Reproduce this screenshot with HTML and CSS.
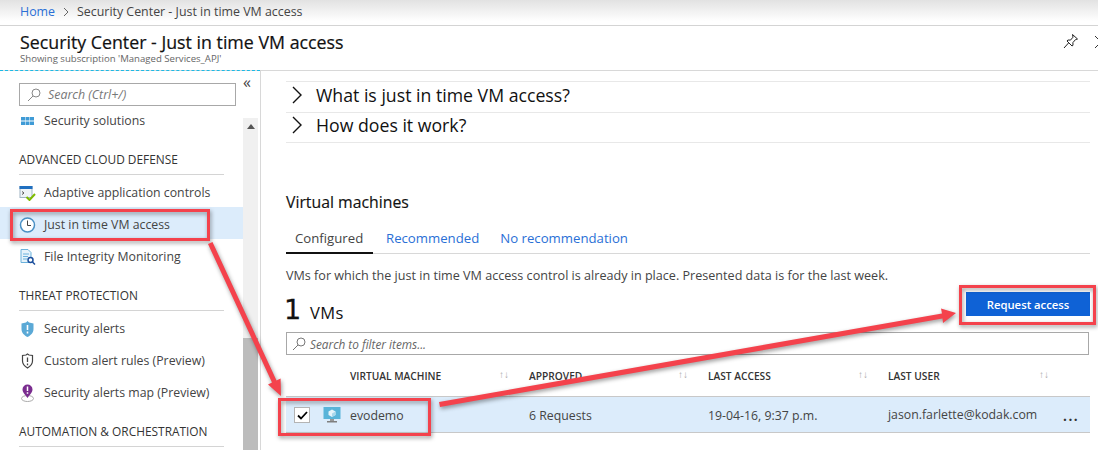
FILE: index.html
```html
<!DOCTYPE html>
<html lang="en">
<head>
<meta charset="utf-8">
<title>Security Center - Just in time VM access</title>
<link rel="stylesheet" href="styles.css">
</head>
<body>
<div class="page">
  <nav class="crumbs"><a class="link">Home</a><svg class="crumb-sep" width="6" height="10" viewBox="0 0 6 10"><path d="M1 1l4 4-4 4" fill="none" stroke="#666"/></svg><span>Security Center - Just in time VM access</span></nav>
  <header class="blade-head">
    <div>
      <h1>Security Center - Just in time VM access</h1>
      <p>Showing subscription 'Managed Services_APJ'</p>
    </div>
    <div class="blade-actions">
      <svg width="16" height="16" viewBox="0 0 16 16"><path d="M9.5 1.5l5 4.5-2 .6-2.6 3 .1 2.7-1 .7-5-5 .9-1 2.6.1 2.5-2.9z" fill="none" stroke="#222"/><path d="M5.5 10L1 15" stroke="#222"/></svg>
      <svg width="8" height="14" viewBox="0 0 8 14"><path d="M1 1l6 6-6 6" fill="none" stroke="#333"/></svg>
    </div>
  </header>
  <div class="blade-body">
    <aside class="side">
      <div class="side-top">
        <div class="side-search">
          <svg width="14" height="14" viewBox="0 0 14 14"><circle cx="9" cy="5" r="4" fill="none" stroke="#888"/><path d="M6 8l-5 5" stroke="#888"/></svg>
          <span>Search (Ctrl+/)</span>
        </div>
        <span class="collapse">«</span>
      </div>
      <div class="side-scroll">
        <div class="side-list">
          <div class="item item-first">
            <svg class="ico" width="13" height="8" viewBox="0 0 13 8"><path fill="#3f9bd6" d="M0 0h4v3.5H0zM4.500 0h4v3.500h-4zM9 0h4v3.500H9zM0 4.500h4V8H0zM4.500 4.500h4V8h-4zM9 4.500h4V8H9z"/></svg>
            <span>Security solutions</span>
          </div>
          <h2>ADVANCED CLOUD DEFENSE</h2>
          <div class="item">
            <svg class="ico" width="16" height="16" viewBox="0 0 16 16"><rect x="0.500" y="1.500" width="12" height="11" fill="#eef3f7" stroke="#9fb4c4"/><rect y="1" width="13" height="3" fill="#1f6fc0"/><path d="M2.500 6.500l2 1.500-2 1.500" fill="none" stroke="#555"/><path d="M7 12l3 3 5.500-6" fill="none" stroke="#7fba00" stroke-width="2"/></svg>
            <span>Adaptive application controls</span>
          </div>
          <div class="item active">
            <svg class="ico" width="16" height="16" viewBox="0 0 16 16"><circle cx="8" cy="8" r="7" fill="#fff" stroke="#4a90c4" stroke-width="1.500"/><path d="M8 3.500V8.500H11.500" fill="none" stroke="#444"/></svg>
            <span>Just in time VM access</span>
          </div>
          <div class="item">
            <svg class="ico" width="16" height="16" viewBox="0 0 16 16"><path d="M1.500.5h7l3 3v10h-10z" fill="#e6f3fb" stroke="#6bb2dc"/><path d="M3.500 5h6M3.500 7.500h5M3.500 10h4" stroke="#6bb2dc"/><circle cx="11" cy="11" r="2.500" fill="#fff" stroke="#1b4f9c" stroke-width="1.500"/><path d="M13 13l2.500 2.500" stroke="#1b4f9c" stroke-width="1.500"/></svg>
            <span>File Integrity Monitoring</span>
          </div>
          <h2>THREAT PROTECTION</h2>
          <div class="item">
            <svg class="ico" width="16" height="16" viewBox="0 0 16 16"><path d="M8 0l1.500 1.500L14 2.500V8c0 4-3 6.500-6 8-3-1.500-6-4-6-8V2.500l4.500-1z" fill="#5ba9d6"/><path d="M8 4v5M8 10.500v2" stroke="#fff" stroke-width="1.600"/></svg>
            <span>Security alerts</span>
          </div>
          <div class="item">
            <svg class="ico" width="16" height="16" viewBox="0 0 16 16"><path d="M8 1l1.500 1 3.500.5V8c0 3.500-2.500 5.500-5 7-2.500-1.500-5-3.500-5-7V2.500L6.500 2z" fill="none" stroke="#444" stroke-width="1.200"/><path d="M8 4.500v4.500M8 10.500v1.700" stroke="#444" stroke-width="1.300"/></svg>
            <span>Custom alert rules (Preview)</span>
          </div>
          <div class="item">
            <svg class="ico" width="16" height="18" viewBox="0 0 16 18"><ellipse cx="8" cy="14.500" rx="6" ry="3" fill="none" stroke="#aaa"/><path d="M8 14C5.500 10.500 3 8.500 3 5.500a5 5 0 0110 0C13 8.500 10.500 10.500 8 14z" fill="#7a2d8f"/><path d="M8 2.500v4.500M8 8.300v1.500" stroke="#fff" stroke-width="1.500"/></svg>
            <span>Security alerts map (Preview)</span>
          </div>
          <h2>AUTOMATION &amp; ORCHESTRATION</h2>
        </div>
        <div class="scrollbar">
          <svg class="scroll-up" width="8" height="5" viewBox="0 0 8 5"><path d="M4 0l4 5H0z" fill="#555"/></svg>
          <div class="thumb"></div>
        </div>
      </div>
    </aside>
    <main class="main">
      <div class="accordion">
        <div class="acc-row"><svg width="11" height="18" viewBox="0 0 11 18"><path d="M1 1l8 8-8 8" fill="none" stroke="#111" stroke-width="1.400"/></svg><span>What is just in time VM access?</span></div>
        <div class="acc-row"><svg width="11" height="18" viewBox="0 0 11 18"><path d="M1 1l8 8-8 8" fill="none" stroke="#111" stroke-width="1.400"/></svg><span>How does it work?</span></div>
      </div>
      <h3>Virtual machines</h3>
      <div class="tabs">
        <span class="tab on">Configured</span>
        <a class="tab link">Recommended</a>
        <a class="tab link">No recommendation</a>
      </div>
      <p class="desc">VMs for which the just in time VM access control is already in place. Presented data is for the last week.</p>
      <div class="count-row">
        <div class="count"><b>1</b><span>VMs</span></div>
        <button class="primary">Request access</button>
      </div>
      <div class="filter">
        <svg width="14" height="14" viewBox="0 0 14 14"><circle cx="9" cy="5" r="4" fill="none" stroke="#777"/><path d="M6 8l-5 5" stroke="#777"/></svg>
        <span>Search to filter items...</span>
      </div>
      <div class="table">
        <div class="thead">
          <span></span>
          <span class="th"><b>VIRTUAL MACHINE</b><i>↑↓</i></span>
          <span class="th"><b>APPROVED</b><i>↑↓</i></span>
          <span class="th"><b>LAST ACCESS</b><i>↑↓</i></span>
          <span class="th th-last"><b>LAST USER</b><i>↑↓</i></span>
        </div>
        <div class="trow">
          <span class="sel">
            <span class="check"><svg width="11" height="9" viewBox="0 0 11 9"><path d="M1 4.500l3 3 6-6.500" fill="none" stroke="#000" stroke-width="1.800"/></svg></span>
            <svg width="18" height="18" viewBox="0 0 18 18"><rect x="0.500" y="1" width="17" height="12" fill="#59b4d9"/><path d="M9 3.500l3.500 2v3.500L9 11l-3.500-2V5.500z" fill="#e6f4fa"/><path d="M9 7.500v3.500l3.500-2V5.500z" fill="#a9d8ec"/><rect x="7" y="13" width="4" height="2" fill="#999"/><rect x="4" y="15" width="10" height="1.500" fill="#7f7f7f"/></svg>
          </span>
          <span>evodemo</span>
          <span>6 Requests</span>
          <span>19-04-16, 9:37 p.m.</span>
          <span class="user"><span>jason.farlette@kodak.com</span><span class="more">...</span></span>
        </div>
      </div>
    </main>
  </div>
</div>
<svg class="notes" width="1098" height="450" viewBox="0 0 1098 450">
  <g fill="none" stroke="#f4424c" stroke-width="3">
    <rect x="11.500" y="210.500" width="197" height="29"/>
    <rect x="279.500" y="399.500" width="150" height="35"/>
    <rect x="960.500" y="286.500" width="134" height="37"/>
  </g>
  <g fill="#f4424c">
    <path d="M208 244L212.500 242 276.500 380.400 280.600 378.600 281 396 268 384.400 272 382.500z"/>
    <path d="M439 402L942 313.500 941 308.500 956 313 943 323 942.500 318.500 440 407z"/>
  </g>
</svg>
</body>
</html>
```
FILE: styles.css
```css
* { box-sizing: border-box; }
html, body { margin: 0; height: 100%; }
body { font-family: "Open Sans", "Noto Sans", sans-serif; color: #333; background: #fff; overflow: hidden; position: relative; }
.page { width: 1098px; height: 450px; display: flex; flex-direction: column; overflow: hidden; }
.link { color: #2a6fd6; }

.crumbs { height: 26px; flex: none; display: flex; align-items: center; gap: 8px; padding: 0 0 2px 20px; font-size: 12.400px; background: linear-gradient(#e2e2e2, #fff 85%); border-bottom: 1px solid #d4d4d4; color: #444; }

.blade-head { height: 45px; flex: none; display: flex; justify-content: space-between; padding: 5px 0 0 20px; border-bottom: 1px solid #d8d8d8; position: relative; }
.blade-head::after { content: ""; position: absolute; left: 0; bottom: -1px; width: 260px; border-bottom: 1px dashed #1cb9e6; }
.blade-head h1 { margin: 0; font-size: 17.800px; line-height: 22px; font-weight: 400; color: #111; -webkit-text-stroke: .2px #111; }
.blade-head p { margin: 0; font-size: 9.600px; line-height: 12px; color: #666; }
.blade-actions { display: flex; gap: 15px; padding-top: 2px; margin-right: -4px; }
.blade-actions svg:last-child { margin-top: 2px; }

.blade-body { flex: 1; display: flex; min-height: 0; }
.side { width: 261px; flex: none; border-right: 1px solid #d8d8d8; display: flex; flex-direction: column; min-height: 0; }
.side-top { height: 45px; flex: none; position: relative; padding: 12px 0 0 19px; }
.side-search { width: 217px; height: 23px; border: 1px solid #a8a8a8; display: flex; align-items: center; gap: 7px; padding-left: 7px; font-size: 12.400px; font-style: italic; color: #777; }
.collapse { position: absolute; left: 243px; top: 3px; font-size: 16px; line-height: 16px; color: #444; }
.side-scroll { flex: 1; display: flex; min-height: 0; overflow: hidden; }
.side-list { width: 243px; flex: none; margin-top: -10px; }
.item { height: 32px; display: flex; align-items: center; padding: 3px 0 0 19px; font-size: 12.300px; color: #444; }
.item .ico { width: 17px; margin-right: 8px; flex: none; }
.item-first { height: 29px; padding-top: 0; }
.active { background: #dcecfb; }
.side-list h2 { margin: 15px 19px 0 19px; height: 25px; font-size: 11.900px; line-height: 18px; font-weight: 400; color: #333; border-bottom: 1px solid #d4d4d4; }
.scrollbar { width: 15px; flex: none; background: #f0f0f0; position: relative; display: flex; flex-direction: column; align-items: center; margin-top: 2px; }
.scroll-up { margin-top: 6px; }
.thumb { position: absolute; left: 0; right: 0; top: 220px; bottom: 0; background: #bcbcbc; }

.main { flex: 1; min-width: 0; padding: 10px 8px 0 25px; }
.accordion { border-top: 1px solid #e8e8e8; }
.acc-row { height: 30.500px; border-bottom: 1px solid #e8e8e8; display: flex; align-items: center; gap: 13px; padding: 0 0 4px 6px; font-size: 17.700px; color: #111; }
.main h3 { margin: 47px 0 0; font-size: 15.800px; line-height: 24px; font-weight: 400; color: #111; -webkit-text-stroke: .15px #111; }
.tabs { display: flex; margin-top: 12px; height: 28px; border-bottom: 1px solid #d8d8d8; font-size: 13.200px; }
.tab { padding: 2px 0 0; height: 28px; line-height: 20px; margin-right: 21px; }
.tab.on { width: 87px; padding-left: 9px; margin-right: 13px; border-bottom: 2px solid #111; color: #444; }
.desc { margin: 13px 0 0; font-size: 12.600px; line-height: 18px; color: #444; white-space: nowrap; }
.count-row { display: flex; justify-content: space-between; align-items: flex-start; margin-top: 9px; height: 38px; }
.count { display: flex; align-items: baseline; color: #111; margin-top: -3px; }
.count b { font-family: "DejaVu Sans", sans-serif; font-size: 27px; line-height: 38px; font-weight: 400; margin-left: -2px; width: 17px; -webkit-text-stroke: .3px #111; }
.count span { font-size: 16.500px; margin-left: 9px; letter-spacing: .4px; }
.primary { width: 124px; height: 24px; border: 0; background: #0f62d6; color: #fff; font: 600 11.300px "Open Sans", sans-serif; padding: 0; margin: -2px 0 0; }
.filter { width: 803px; height: 23px; border: 1px solid #a8a8a8; display: flex; align-items: center; gap: 4px; padding-left: 5px; font-size: 11.800px; font-style: italic; color: #666; }
.thead, .trow { display: grid; grid-template-columns: 64px 179px 179px 180px 202px; align-items: center; }
.thead { height: 42px; font-size: 10.200px; border-bottom: 1px solid #c8c8c8; }
.th { display: flex; justify-content: space-between; padding-right: 20px; }
.th-last { padding-right: 41px; }
.th b { font-weight: 600; color: #333; }
.th i { font-style: normal; color: #aaa; font-size: 10px; margin-top: -2px; }
.trow { height: 36px; padding-top: 1px; background: #dcecfb; border-bottom: 1px solid #c8c8c8; font-size: 12.300px; color: #444; }
.sel { display: flex; align-items: center; gap: 13px; padding-left: 8px; }
.check { width: 16px; height: 16px; border: 1px solid #b4b4b4; background: #fff; display: flex; align-items: center; justify-content: center; }
.user { display: flex; justify-content: space-between; padding-right: 11px; white-space: nowrap; }
.more { font-size: 16px; line-height: 18px; font-weight: 600; color: #333; letter-spacing: 1px; }

.notes { position: absolute; left: 0; top: 0; pointer-events: none; filter: drop-shadow(1px 2px 2px rgba(0,0,0,.4)); }
```
